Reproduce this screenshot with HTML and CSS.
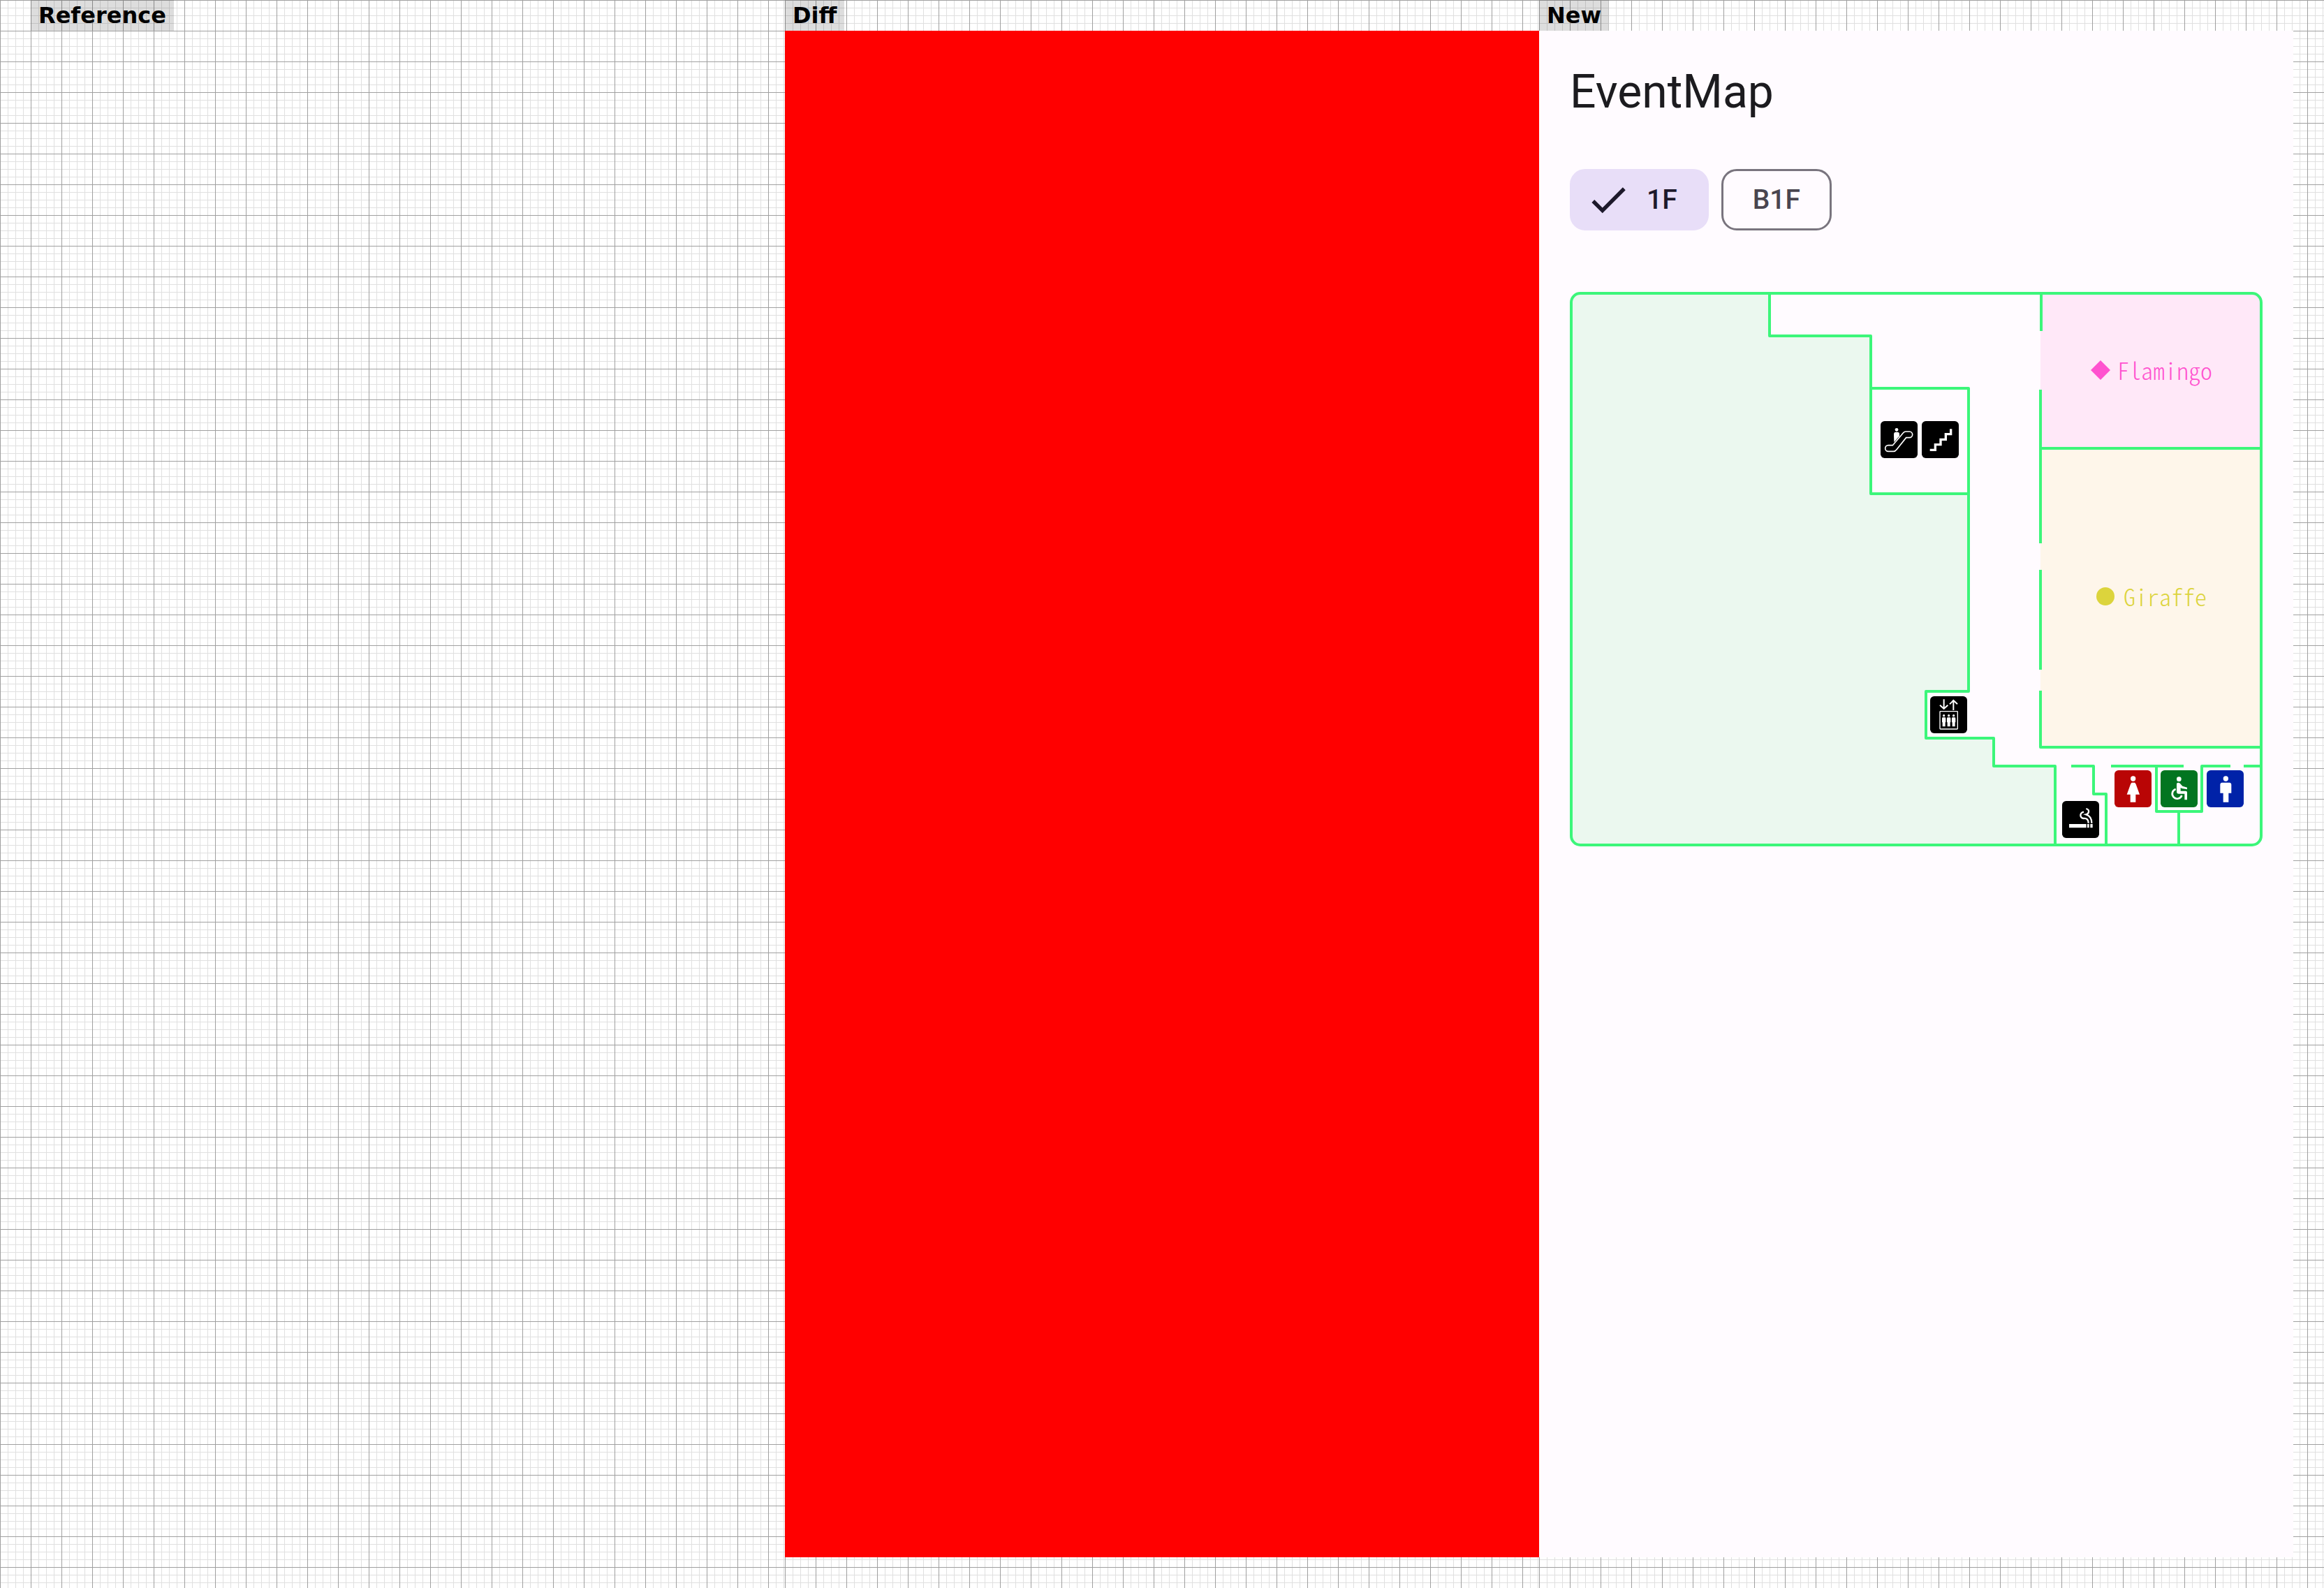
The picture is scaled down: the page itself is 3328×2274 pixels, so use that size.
FILE: index.html
```html
<!DOCTYPE html>
<html lang="en">
<head>
<meta charset="utf-8">
<title>EventMap comparison</title>
<link rel="stylesheet" href="styles.css">
</head>
<body>
<main class="compare">
  <section class="pane">
    <h2 class="tag">Reference</h2>
    <div class="shot"></div>
  </section>
  <section class="pane">
    <h2 class="tag">Diff</h2>
    <div class="shot shot-diff"></div>
  </section>
  <section class="pane">
    <h2 class="tag">New</h2>
    <div class="shot shot-app">
      <h1 class="title">EventMap</h1>
      <div class="chips">
        <button class="chip chip-on" type="button" aria-pressed="true">
          <svg class="check" viewBox="0 0 24 24" aria-hidden="true"><path d="M9 16.17 4.83 12l-1.42 1.41L9 19 21 7l-1.41-1.41z"/></svg>
          1F
        </button>
        <button class="chip" type="button" aria-pressed="false">B1F</button>
      </div>
      <svg class="map" viewBox="0 0 992 794" role="img" aria-label="Floor map 1F">
        <!-- rooms -->
        <path class="hall" d="M14 2H286V63H431V289H571V572H510V639H607V679H695V792H14A12 12 0 0 1 2 780V14A12 12 0 0 1 14 2Z"/>
        <path class="flamingo" d="M674 2H978A12 12 0 0 1 990 14V223H674Z"/>
        <path class="giraffe" d="M674 223H990V652H674Z"/>
        <!-- walls -->
        <g class="walls">
          <rect x="2" y="2" width="988" height="790" rx="13"/>
          <path d="M286 2V63H431V289H571M431 138H571V572H510V639H607V679H695V792"/>
          <path d="M675 2V56M674 140V360M674 398V541M674 571V652H990M674 224H990"/>
          <path d="M718 679H750V719H768V792M775 679H879M840 679V744H905V679H946M965 679H990M872 744V792"/>
        </g>
        <!-- escalator -->
        <svg x="445" y="185" width="53" height="53" viewBox="0 0 159 159">
          <rect width="159" height="159" rx="17"/>
          <circle class="ink" cx="69" cy="37" r="7"/>
          <path class="ink" d="M57 56q0-9 9-9h6q9 0 9 9v8L58 91Z"/>
          <path class="line" stroke-width="5" d="M33 104H52L97 51Q102 45 108 45H124A12 12 0 0 1 124 71H110L69 122Q63 130 56 130H33A13 13 0 0 1 33 104Z"/>
        </svg>
        <!-- stairs -->
        <svg x="504" y="185" width="53" height="53" viewBox="0 0 159 159">
          <rect width="159" height="159" rx="17"/>
          <path class="line" stroke-width="10" d="M35 124H58V101H81V79H103V56H125V34"/>
        </svg>
        <!-- elevator -->
        <svg x="516" y="579" width="53" height="53" viewBox="0 0 159 159">
          <rect width="159" height="159" rx="17"/>
          <path class="line" stroke-width="6" d="M59 13V54M42 38 59 54 76 38M100 60V18M84 34 100 18 117 34"/>
          <rect class="line" stroke-width="4" x="42" y="65" width="76" height="76" rx="2"/>
          <g class="ink">
            <circle cx="59" cy="83" r="5"/><path d="M51 95q0-4 4-4h8q4 0 4 4v17h-2v18H53V112h-2Z"/>
            <circle cx="80" cy="83" r="5"/><path d="M72 95q0-4 4-4h8q4 0 4 4v17h-2v18H74V112h-2Z"/>
            <circle cx="101" cy="83" r="5"/><path d="M93 95q0-4 4-4h8q4 0 4 4v17h-2v18H95V112h-2Z"/>
          </g>
        </svg>
        <!-- smoking area -->
        <svg x="705" y="729" width="53" height="53" viewBox="0 0 159 159">
          <rect width="159" height="159" rx="17"/>
          <path class="ink" d="M30 99H104V115H30ZM108 99H116V115H108ZM121 99H131V115H121Z"/>
          <path class="line" stroke-width="7" d="M103 33Q116 37 114 47 112 56 103 58 127 66 127 95M93 47Q79 50 79 62 80 74 93 75 113 73 113 95"/>
        </svg>
        <!-- women's restroom -->
        <svg x="780" y="685" width="53" height="53" viewBox="0 0 159 159">
          <rect class="red" width="159" height="159" rx="17"/>
          <circle class="ink" cx="80" cy="36" r="11"/>
          <path class="ink" d="M74 53H87Q90 55 92 60L108 104H91V137H68V104H53L69 60Q71 55 74 53Z"/>
        </svg>
        <!-- accessible restroom -->
        <svg x="846" y="685" width="53" height="53" viewBox="0 0 159 159">
          <rect class="green" width="159" height="159" rx="17"/>
          <circle class="ink" cx="79" cy="38" r="10"/>
          <path class="ink" d="M69 57Q76 50 84 57L94 68 114 74V82L91 78 86 75V89H108Q114 89 114 96V127H103V101H78Q69 101 69 92Z"/>
          <path class="line" stroke-width="8" d="M65 81A21 21 0 1 0 91 108"/>
        </svg>
        <!-- men's restroom -->
        <svg x="912" y="685" width="53" height="53" viewBox="0 0 159 159">
          <rect class="blue" width="159" height="159" rx="17"/>
          <circle class="ink" cx="82" cy="36" r="11"/>
          <path class="ink" d="M66 53H98Q106 54 106 62V98H94V137H71V98H58V62Q58 54 66 53Z"/>
        </svg>
        <!-- room names -->
        <path class="pink" d="M760 98 774 112 760 126 746 112Z"/>
        <text class="room pink" x="784" y="126">Flamingo</text>
        <circle class="yellow" cx="767" cy="436" r="13"/>
        <text class="room yellow" x="793" y="450">Giraffe</text>
      </svg>
    </div>
  </section>
</main>
</body>
</html>
```
FILE: styles.css
```css
body {
  margin: 0;
  background: #fff;
}

.compare {
  display: flex;
  min-height: 100vh;
}

.pane {
  flex: 1 1 0;
  display: flex;
  flex-direction: column;
  align-items: flex-start;
  padding-bottom: 44px;
  background-image:
    linear-gradient(#a0a0a0 1px, transparent 1px),
    linear-gradient(90deg, #a0a0a0 1px, transparent 1px),
    linear-gradient(#e0e0e0 1px, transparent 1px),
    linear-gradient(90deg, #e0e0e0 1px, transparent 1px);
  background-size: 44px 44px, 44px 44px, 11px 11px, 11px 11px;
}

.pane:first-child {
  padding-left: 44px;
}

.pane:last-child {
  padding-right: 44px;
}

.tag {
  margin: 0;
  padding: 0 11px;
  background: rgba(0, 0, 0, 0.133);
  color: #000;
  font: bold 32px/44px "DejaVu Sans", sans-serif;
}

.shot {
  box-sizing: border-box;
  flex: 1;
  width: 100%;
}

.shot-diff {
  background: #f00;
}

.shot-app {
  padding: 44px;
  background: #fffbff;
  font-family: Roboto, sans-serif;
}

.title {
  margin: 0 0 66px;
  color: #1c1b1f;
  font-size: 66px;
  font-weight: 400;
  line-height: 88px;
}

.chips {
  display: flex;
  gap: 18px;
  margin-bottom: 88px;
}

.chip {
  box-sizing: border-box;
  display: flex;
  align-items: center;
  gap: 22px;
  height: 88px;
  padding: 0 42px;
  border: 3px solid #79747e;
  border-radius: 22px;
  background: transparent;
  color: #49454f;
  font: 500 39px/55px Roboto, sans-serif;
}

.chip-on {
  padding-left: 19px;
  border-color: #e8def8;
  background: #e8def8;
  color: #1d192b;
}

.check {
  width: 66px;
  height: 66px;
  fill: currentColor;
}

.map {
  display: block;
  width: 100%;
}

.walls {
  fill: none;
  stroke: #3cf67a;
  stroke-width: 4;
  stroke-linejoin: round;
}

.hall {
  fill: #ebf8ef;
}

.flamingo {
  fill: #ffe8f8;
}

.giraffe {
  fill: #fef6ea;
}

.red {
  fill: #b90505;
}

.green {
  fill: #027520;
}

.blue {
  fill: #0022a8;
}

.ink {
  fill: #fff;
}

.line {
  fill: none;
  stroke: #fff;
}

.pink {
  fill: #ff52cf;
}

.yellow {
  fill: #dcd43c;
}

.room {
  font-family: "Noto Sans CJK JP", sans-serif;
  font-size: 34px;
  font-weight: 300;
  font-variant-ligatures: none;
  font-feature-settings: "hwid", "liga" 0;
}
```
